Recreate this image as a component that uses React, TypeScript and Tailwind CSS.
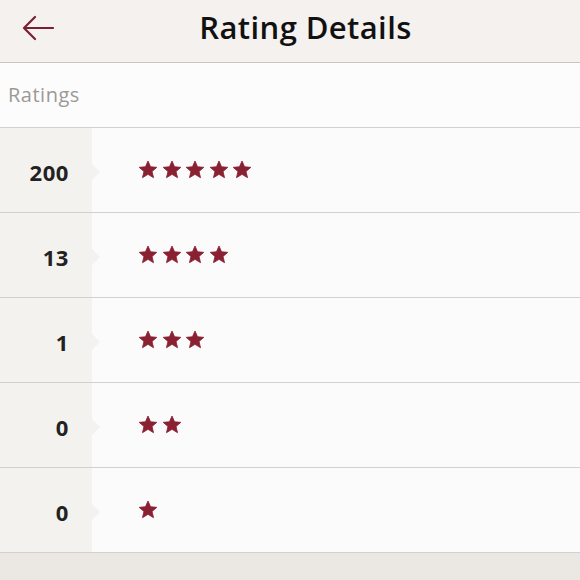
const rows = [
  { count: 200, stars: 5 },
  { count: 13, stars: 4 },
  { count: 1, stars: 3 },
  { count: 0, stars: 2 },
  { count: 0, stars: 1 },
];

function Star() {
  return (
    <svg width="20" height="19" viewBox="0 0 24 23" className="shrink-0">
      <path
        d="M12 1.2l3.1 7 7.6.7-5.8 5 1.8 7.5L12 17.4l-6.7 4 1.8-7.5-5.8-5 7.6-.7z"
        fill="#8a2133"
        stroke="#8a2133"
        strokeWidth="1"
        strokeLinejoin="round"
      />
    </svg>
  );
}

function BackArrow() {
  return (
    <svg width="32" height="26" viewBox="0 0 32 26" fill="none">
      <path d="M2 13h29M13 2L2 13l11 11" stroke="#7b2030" strokeWidth="2.2" strokeLinecap="round" strokeLinejoin="round" />
    </svg>
  );
}

export default function App() {
  return (
    <div className="w-[580px] h-[580px] bg-[#ebe8e4] flex flex-col overflow-hidden" style={{ fontFamily: "'Open Sans', Lato, sans-serif" }}>
      <header className="h-[63px] shrink-0 bg-[#f4f1ee] border-b border-[#c8c5c2] flex items-center pl-[22px] pr-[23px] pb-[6px]">
        <BackArrow />
        <h1 className="flex-1 text-center text-[31px] font-semibold text-[#111] leading-none tracking-[0.4px] pb-[2px]">Rating Details</h1>
      </header>

      <div className="h-[65px] shrink-0 bg-[#fdfcfc] border-b border-[#d3d0cd] flex items-center pl-[8px]">
        <span className="text-[20px] text-[#9c9995] tracking-[0.5px]">Ratings</span>
      </div>

      {rows.map((r, i) => (
        <div key={i} className="h-[85px] shrink-0 flex border-b border-[#d3d0cd] bg-[#fcfbfb]">
          <div className="w-[92px] bg-[#f4f2ef] relative flex items-center justify-end pr-[23px] pt-[4px]">
            <span className="text-[22px] font-bold text-[#222] tracking-[0.6px]">{r.count}</span>
            <span className="absolute right-[-8px] top-[36px] w-0 h-0 border-y-[8px] border-y-transparent border-l-[8px] border-l-[#f4f2ef]" />
          </div>
          <div className="flex-1 flex items-center gap-[3.5px] pl-[46px] pb-[1px]">
            {Array.from({ length: r.stars }).map((_, j) => (
              <Star key={j} />
            ))}
          </div>
        </div>
      ))}
    </div>
  );
}
